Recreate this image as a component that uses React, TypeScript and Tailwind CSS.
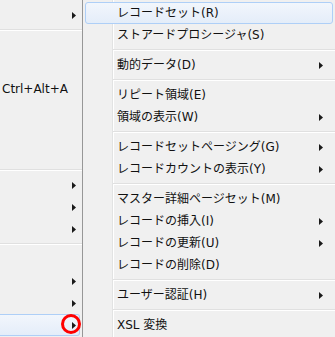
import React from 'react';

type Entry = { label?: string; sub?: boolean; sep?: boolean; active?: boolean };

const rightItems: Entry[] = [
  { label: 'レコードセット(R)', active: true },
  { label: 'ストアードプロシージャ(S)' },
  { sep: true },
  { label: '動的データ(D)', sub: true },
  { sep: true },
  { label: 'リピート領域(E)' },
  { label: '領域の表示(W)', sub: true },
  { sep: true },
  { label: 'レコードセットページング(G)', sub: true },
  { label: 'レコードカウントの表示(Y)', sub: true },
  { sep: true },
  { label: 'マスター詳細ページセット(M)' },
  { label: 'レコードの挿入(I)', sub: true },
  { label: 'レコードの更新(U)', sub: true },
  { label: 'レコードの削除(D)' },
  { sep: true },
  { label: 'ユーザー認証(H)', sub: true },
  { sep: true },
  { label: 'XSL 変換' },
];

const leftItems: Entry[] = [
  { sub: true },
  { sep: true },
  {},
  {},
  { label: 'Ctrl+Alt+A' },
  {},
  {},
  {},
  { sep: true },
  { sub: true },
  { sub: true },
  { sub: true },
  { sep: true },
  {},
  { sub: true },
  { sub: true },
  { sub: true, active: true },
];

const Arrow = () => (
  <svg width="4" height="7" viewBox="0 0 4 7" className="shrink-0">
    <polygon points="0,0 4,3.5 0,7" fill="#1a1a1a" />
  </svg>
);

const Separator = ({ inset }: { inset: string }) => (
  <div className={`h-[8px] flex flex-col justify-center ${inset}`}>
    <div className="h-px bg-[#e0e0e0]" />
    <div className="h-px bg-white" />
  </div>
);

const hl =
  'border border-[#aecff7] rounded-[3px] bg-[linear-gradient(to_bottom,#f2f6fc,#e4edf9)]';

export default function App() {
  return (
    <div
      className="flex w-[335px] h-[337px] overflow-hidden bg-[#f0f0f0] text-[12px] text-[#111]"
      style={{ fontFamily: '"DejaVu Sans", "Noto Sans CJK JP", sans-serif' }}
    >
      {/* parent menu, cut off on the left */}
      <div className="w-[83px] shrink-0 border-r border-[#979797] pt-[4px]">
        {leftItems.map((it, i) =>
          it.sep ? (
            <Separator key={i} inset="" />
          ) : (
            <div
              key={i}
              className={`relative h-[22px] mr-[2px] flex items-center ${
                it.active ? `${hl} border-l-0 rounded-l-none` : 'border border-transparent'
              }`}
            >
              {it.label && <span className="ml-[1px] leading-none">{it.label}</span>}
              {it.sub && (
                <div className="ml-auto mr-[3px] flex items-center">
                  <Arrow />
                </div>
              )}
              {it.active && (
                <div className="absolute right-[-2px] top-[-1px] w-[20px] h-[20px] rounded-full border-[3px] border-[#ff0000]" />
              )}
            </div>
          )
        )}
      </div>

      {/* submenu */}
      <div className="flex-1 pt-[2px] bg-[linear-gradient(to_right,#f0f0f0_29px,#e2e3e3_29px,#e2e3e3_30px,#ffffff_30px,#ffffff_31px,#f0f0f0_31px)]">
        {rightItems.map((it, i) =>
          it.sep ? (
            <Separator key={i} inset="ml-[30px]" />
          ) : (
            <div
              key={i}
              className={`h-[22px] mx-[2px] flex items-center pl-[31px] pr-[9px] ${
                it.active ? hl : 'border border-transparent'
              }`}
            >
              <span className="leading-none whitespace-nowrap">{it.label}</span>
              {it.sub && (
                <div className="ml-auto flex items-center">
                  <Arrow />
                </div>
              )}
            </div>
          )
        )}
      </div>
    </div>
  );
}
